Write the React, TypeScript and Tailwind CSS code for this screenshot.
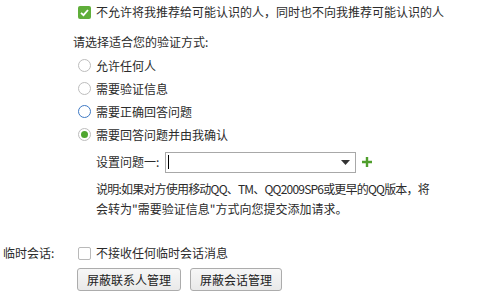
import React from 'react';

const font = { fontFamily: '"Microsoft YaHei", "Noto Sans CJK SC", "Noto Sans", sans-serif' };

const Check = ({ checked }: { checked?: boolean }) =>
  checked ? (
    <span className="flex h-[13px] w-[13px] items-center justify-center rounded-[2px] bg-[#5fae3a]">
      <svg width="11" height="11" viewBox="0 0 11 11">
        <path d="M2 5.8 L4.5 8.2 L9 3" fill="none" stroke="#fff" strokeWidth="1.8" />
      </svg>
    </span>
  ) : (
    <span className="h-[13px] w-[13px] rounded-[2px] border border-[#b9b9b9] bg-white" />
  );

const Radio = ({ checked, focus }: { checked?: boolean; focus?: boolean }) => (
  <span
    className={
      'flex h-[13px] w-[13px] items-center justify-center rounded-full border bg-white ' +
      (focus ? 'border-[#3e79c4]' : 'border-[#bdbdbd]')
    }
  >
    {checked && <span className="h-[7px] w-[7px] rounded-full bg-[#4fa62f]" />}
  </span>
);

const Row = ({ children }: { children: React.ReactNode }) => (
  <div className="flex h-[23px] items-center gap-[5px] pl-[78px]">{children}</div>
);

export default function App() {
  const options = [
    { label: '允许任何人' },
    { label: '需要验证信息' },
    { label: '需要正确回答问题', focus: true },
    { label: '需要回答问题并由我确认', checked: true },
  ];

  return (
    <div className="h-[300px] w-[500px] overflow-hidden bg-white text-[12px] text-[#2b2b2b]" style={font}>
      {/* 推荐设置 */}
      <div className="flex h-[24px] items-center gap-[5px] pl-[78px]">
        <Check checked />
        <span>不允许将我推荐给可能认识的人，同时也不向我推荐可能认识的人</span>
      </div>

      <div className="mt-[6px] flex h-[24px] items-center pl-[73px]">请选择适合您的验证方式:</div>

      {options.map((o) => (
        <Row key={o.label}>
          <Radio checked={o.checked} focus={o.focus} />
          <span>{o.label}</span>
        </Row>
      ))}

      {/* 问题设置 */}
      <div className="mt-[6px] flex h-[20px] items-center pl-[96px]">
        <span className="w-[69px]">设置问题一:</span>
        <div className="relative flex h-[21px] w-[191px] items-center border border-[#a8a8a8] bg-white">
          <span className="ml-[2px] h-[14px] w-[1px] bg-black" />
          <svg className="absolute right-[5px] top-[7px]" width="9" height="5" viewBox="0 0 9 5">
            <path d="M0 0 H9 L4.5 5 Z" fill="#333" />
          </svg>
        </div>
        <svg className="ml-[5px]" width="12" height="12" viewBox="0 0 12 12">
          <path d="M6 1 V11 M1 6 H11" stroke="#4f9e2c" strokeWidth="2.4" />
        </svg>
      </div>

      <div className="mt-[7px] pl-[96px] leading-[20px]">
        <div className="tracking-[-0.8px]">说明:如果对方使用移动QQ、TM、QQ2009SP6或更早的QQ版本，将</div>
        <div>会转为"需要验证信息"方式向您提交添加请求。</div>
      </div>

      {/* 临时会话 */}
      <div className="mt-[24px] flex h-[20px] items-center">
        <span className="w-[78px] pl-[3px]">临时会话:</span>
        <Check />
        <span className="ml-[5px]">不接收任何临时会话消息</span>
      </div>

      <div className="mt-[5px] flex gap-[9px] pl-[77px]">
        {['屏蔽联系人管理', '屏蔽会话管理'].map((b) => (
          <button
            key={b}
            className="h-[23px] rounded-[3px] border border-[#acacac] bg-gradient-to-b from-[#f7f7f7] to-[#e9e9e9] px-[9px] text-[12px] text-[#222]"
            style={font}
          >
            {b}
          </button>
        ))}
      </div>
    </div>
  );
}
